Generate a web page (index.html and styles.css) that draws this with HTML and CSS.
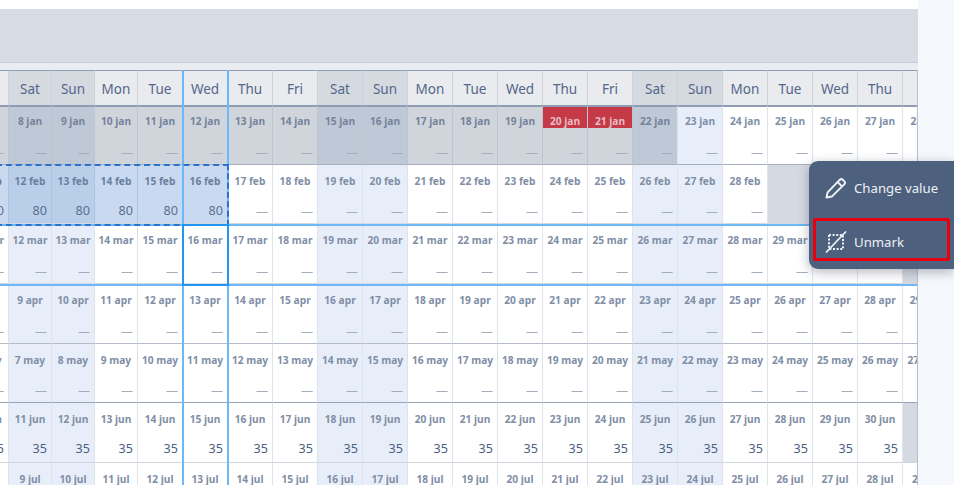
FILE: index.html
```html
<!DOCTYPE html>
<html lang="en">
<head>
    <meta charset="UTF-8">
    <meta name="viewport" content="width=device-width, initial-scale=1.0">
    <title>Calendar</title>
    <link rel="stylesheet" href="styles.css">
</head>
<body>
    <div class="page">
        <main class="main">
            <div class="toolbar"></div>
            <div class="strip"></div>
            <div class="calendar">
                <div class="row head">
                    <div class="cell"></div>
                    <div class="cell we">Sat</div><div class="cell we">Sun</div><div class="cell">Mon</div><div class="cell">Tue</div><div class="cell">Wed</div><div class="cell">Thu</div><div class="cell">Fri</div>
                    <div class="cell we">Sat</div><div class="cell we">Sun</div><div class="cell">Mon</div><div class="cell">Tue</div><div class="cell">Wed</div><div class="cell">Thu</div><div class="cell">Fri</div>
                    <div class="cell we">Sat</div><div class="cell we">Sun</div><div class="cell">Mon</div><div class="cell">Tue</div><div class="cell">Wed</div><div class="cell">Thu</div>
                    <div class="cell"></div>
                </div>
                <div class="row jan">
                    <div class="cell past"><b>7 jan</b><i>—</i></div>
                    <div class="cell past we"><b>8 jan</b><i>—</i></div><div class="cell past we"><b>9 jan</b><i>—</i></div><div class="cell past"><b>10 jan</b><i>—</i></div><div class="cell past"><b>11 jan</b><i>—</i></div><div class="cell past"><b>12 jan</b><i>—</i></div><div class="cell past"><b>13 jan</b><i>—</i></div><div class="cell past"><b>14 jan</b><i>—</i></div>
                    <div class="cell past we"><b>15 jan</b><i>—</i></div><div class="cell past we"><b>16 jan</b><i>—</i></div><div class="cell past"><b>17 jan</b><i>—</i></div><div class="cell past"><b>18 jan</b><i>—</i></div><div class="cell past"><b>19 jan</b><i>—</i></div><div class="cell past closed"><b>20 jan</b><i>—</i></div><div class="cell past closed"><b>21 jan</b><i>—</i></div>
                    <div class="cell past we"><b>22 jan</b><i>—</i></div><div class="cell we"><b>23 jan</b><i>—</i></div><div class="cell"><b>24 jan</b><i>—</i></div><div class="cell"><b>25 jan</b><i>—</i></div><div class="cell"><b>26 jan</b><i>—</i></div><div class="cell"><b>27 jan</b><i>—</i></div>
                    <div class="cell"><b>28 jan</b></div>
                </div>
                <div class="row feb">
                    <div class="cell sel"><b>11 feb</b><i>80</i></div>
                    <div class="cell sel we"><b>12 feb</b><i>80</i></div><div class="cell sel we"><b>13 feb</b><i>80</i></div><div class="cell sel"><b>14 feb</b><i>80</i></div><div class="cell sel"><b>15 feb</b><i>80</i></div><div class="cell sel"><b>16 feb</b><i>80</i></div><div class="cell"><b>17 feb</b><i>—</i></div><div class="cell"><b>18 feb</b><i>—</i></div>
                    <div class="cell we"><b>19 feb</b><i>—</i></div><div class="cell we"><b>20 feb</b><i>—</i></div><div class="cell"><b>21 feb</b><i>—</i></div><div class="cell"><b>22 feb</b><i>—</i></div><div class="cell"><b>23 feb</b><i>—</i></div><div class="cell"><b>24 feb</b><i>—</i></div><div class="cell"><b>25 feb</b><i>—</i></div>
                    <div class="cell we"><b>26 feb</b><i>—</i></div><div class="cell we"><b>27 feb</b><i>—</i></div><div class="cell"><b>28 feb</b><i>—</i></div><div class="cell off"></div><div class="cell off"></div><div class="cell off"></div>
                    <div class="cell off"></div>
                </div>
                <div class="row mar">
                    <div class="cell"><b>11 mar</b><i>—</i></div>
                    <div class="cell we"><b>12 mar</b><i>—</i></div><div class="cell we"><b>13 mar</b><i>—</i></div><div class="cell"><b>14 mar</b><i>—</i></div><div class="cell"><b>15 mar</b><i>—</i></div><div class="cell"><b>16 mar</b><i>—</i></div><div class="cell"><b>17 mar</b><i>—</i></div><div class="cell"><b>18 mar</b><i>—</i></div>
                    <div class="cell we"><b>19 mar</b><i>—</i></div><div class="cell we"><b>20 mar</b><i>—</i></div><div class="cell"><b>21 mar</b><i>—</i></div><div class="cell"><b>22 mar</b><i>—</i></div><div class="cell"><b>23 mar</b><i>—</i></div><div class="cell"><b>24 mar</b><i>—</i></div><div class="cell"><b>25 mar</b><i>—</i></div>
                    <div class="cell we"><b>26 mar</b><i>—</i></div><div class="cell we"><b>27 mar</b><i>—</i></div><div class="cell"><b>28 mar</b><i>—</i></div><div class="cell"><b>29 mar</b><i>—</i></div><div class="cell"></div><div class="cell"></div>
                    <div class="cell off"></div>
                </div>
                <div class="row apr">
                    <div class="cell"><b>8 apr</b><i>—</i></div>
                    <div class="cell we"><b>9 apr</b><i>—</i></div><div class="cell we"><b>10 apr</b><i>—</i></div><div class="cell"><b>11 apr</b><i>—</i></div><div class="cell"><b>12 apr</b><i>—</i></div><div class="cell"><b>13 apr</b><i>—</i></div><div class="cell"><b>14 apr</b><i>—</i></div><div class="cell"><b>15 apr</b><i>—</i></div>
                    <div class="cell we"><b>16 apr</b><i>—</i></div><div class="cell we"><b>17 apr</b><i>—</i></div><div class="cell"><b>18 apr</b><i>—</i></div><div class="cell"><b>19 apr</b><i>—</i></div><div class="cell"><b>20 apr</b><i>—</i></div><div class="cell"><b>21 apr</b><i>—</i></div><div class="cell"><b>22 apr</b><i>—</i></div>
                    <div class="cell we"><b>23 apr</b><i>—</i></div><div class="cell we"><b>24 apr</b><i>—</i></div><div class="cell"><b>25 apr</b><i>—</i></div><div class="cell"><b>26 apr</b><i>—</i></div><div class="cell"><b>27 apr</b><i>—</i></div><div class="cell"><b>28 apr</b><i>—</i></div>
                    <div class="cell"><b>29 apr</b></div>
                </div>
                <div class="row may">
                    <div class="cell"><b>6 may</b><i>—</i></div>
                    <div class="cell we"><b>7 may</b><i>—</i></div><div class="cell we"><b>8 may</b><i>—</i></div><div class="cell"><b>9 may</b><i>—</i></div><div class="cell"><b>10 may</b><i>—</i></div><div class="cell"><b>11 may</b><i>—</i></div><div class="cell"><b>12 may</b><i>—</i></div><div class="cell"><b>13 may</b><i>—</i></div>
                    <div class="cell we"><b>14 may</b><i>—</i></div><div class="cell we"><b>15 may</b><i>—</i></div><div class="cell"><b>16 may</b><i>—</i></div><div class="cell"><b>17 may</b><i>—</i></div><div class="cell"><b>18 may</b><i>—</i></div><div class="cell"><b>19 may</b><i>—</i></div><div class="cell"><b>20 may</b><i>—</i></div>
                    <div class="cell we"><b>21 may</b><i>—</i></div><div class="cell we"><b>22 may</b><i>—</i></div><div class="cell"><b>23 may</b><i>—</i></div><div class="cell"><b>24 may</b><i>—</i></div><div class="cell"><b>25 may</b><i>—</i></div><div class="cell"><b>26 may</b><i>—</i></div>
                    <div class="cell"><b>27 may</b></div>
                </div>
                <div class="row jun">
                    <div class="cell"><b>10 jun</b><i>35</i></div>
                    <div class="cell we"><b>11 jun</b><i>35</i></div><div class="cell we"><b>12 jun</b><i>35</i></div><div class="cell"><b>13 jun</b><i>35</i></div><div class="cell"><b>14 jun</b><i>35</i></div><div class="cell"><b>15 jun</b><i>35</i></div><div class="cell"><b>16 jun</b><i>35</i></div><div class="cell"><b>17 jun</b><i>35</i></div>
                    <div class="cell we"><b>18 jun</b><i>35</i></div><div class="cell we"><b>19 jun</b><i>35</i></div><div class="cell"><b>20 jun</b><i>35</i></div><div class="cell"><b>21 jun</b><i>35</i></div><div class="cell"><b>22 jun</b><i>35</i></div><div class="cell"><b>23 jun</b><i>35</i></div><div class="cell"><b>24 jun</b><i>35</i></div>
                    <div class="cell we"><b>25 jun</b><i>35</i></div><div class="cell we"><b>26 jun</b><i>35</i></div><div class="cell"><b>27 jun</b><i>35</i></div><div class="cell"><b>28 jun</b><i>35</i></div><div class="cell"><b>29 jun</b><i>35</i></div><div class="cell"><b>30 jun</b><i>35</i></div>
                    <div class="cell off"></div>
                </div>
                <div class="row jul">
                    <div class="cell"></div>
                    <div class="cell we"><b>9 jul</b></div><div class="cell we"><b>10 jul</b></div><div class="cell"><b>11 jul</b></div><div class="cell"><b>12 jul</b></div><div class="cell"><b>13 jul</b></div><div class="cell"><b>14 jul</b></div><div class="cell"><b>15 jul</b></div>
                    <div class="cell we"><b>16 jul</b></div><div class="cell we"><b>17 jul</b></div><div class="cell"><b>18 jul</b></div><div class="cell"><b>19 jul</b></div><div class="cell"><b>20 jul</b></div><div class="cell"><b>21 jul</b></div><div class="cell"><b>22 jul</b></div>
                    <div class="cell we"><b>23 jul</b></div><div class="cell we"><b>24 jul</b></div><div class="cell"><b>25 jul</b></div><div class="cell"><b>26 jul</b></div><div class="cell"><b>27 jul</b></div><div class="cell"><b>28 jul</b></div>
                    <div class="cell"><b>29 jul</b></div>
                </div>

                <div class="hl hl-col"></div>
                <div class="hl hl-row"></div>
                <div class="hl hl-range"></div>
                <div class="hl hl-cell"></div>
            </div>
        </main>
        <aside class="rail"></aside>

        <div class="menu">
            <button class="menu-item">
                <svg width="22" height="22" viewBox="0 0 22 22" fill="none" stroke="#eef1f5" stroke-width="2" stroke-linejoin="round">
                    <path d="M1.5 20.5 L2.6 15.4 L14.6 2.9 Q16.3 1.3 18 2.9 L19.2 4.1 Q20.8 5.8 19.2 7.4 L7 19.4 Z"/>
                    <path d="M12.6 5 L17 9.4"/>
                </svg>
                Change value
            </button>
            <button class="menu-item active">
                <svg width="22" height="22" viewBox="0 0 22 22" fill="none" stroke="#eef1f5">
                    <rect x="4" y="4" width="14" height="14" stroke-width="2" stroke-dasharray="2 1.6"/>
                    <path d="M1 21.5 L21 0.5" stroke-width="1.7"/>
                </svg>
                Unmark
            </button>
        </div>
    </div>
</body>
</html>
```

FILE: styles.css
```css
html, body {
    margin: 0;
    height: 100%;
    overflow: hidden;
}
body {
    font-family: "Noto Sans", sans-serif;
    background: white;
}
.page {
    position: relative;
    display: flex;
    height: 485px;
    overflow: hidden;
}
.main {
    width: 918px;
    flex-shrink: 0;
    padding-top: 9px;
}
.rail {
    flex: 1;
    background-color: #f5f8fc;
}
.toolbar {
    height: 53px;
    background-color: #d7dbe3;
    border-bottom: 1px solid #c5cbd8;
}
.strip {
    height: 7px;
    background-color: #e9ecf0;
}

/* calendar */
.calendar {
    position: relative;
    display: grid;
    grid-template-columns: 8px repeat(3, 43px) repeat(17, 45px) 15px;
    grid-template-rows: 35px repeat(7, 59.7px);
    border-right: 1px solid #b5bfd0;
}
.row {
    display: contents;
}
.cell {
    display: flex;
    flex-direction: column;
    min-width: 0;
    overflow: hidden;
    box-sizing: border-box;
    padding-top: 2px;
    background-color: white;
    border-left: 1px solid #dfe3ea;
    border-bottom: 1px solid #d5d9e2;
}
.cell:first-child {
    border-left: none;
}
.cell b {
    display: block;
    padding: 8px 0 1px;
    font-size: 10.2px;
    line-height: 12px;
    font-weight: 700;
    color: #808ea6;
    text-align: center;
    white-space: nowrap;
}
.cell i {
    display: block;
    margin-top: auto;
    padding: 0 4px 4px 0;
    font-style: normal;
    font-size: 12px;
    line-height: 14px;
    color: #a3adbc;
    text-align: right;
}
.cell:first-child b,
.cell:first-child i {
    flex-shrink: 0;
    width: 43px;
    box-sizing: border-box;
    margin-left: -35px;
}
.cell:last-child b {
    flex-shrink: 0;
    width: 45px;
}
.we { background-color: #e7eef9; }
.past { background-color: #d0d4db; border-left-color: #bfc5d0; }
.past.we { background-color: #bfc8d6; }
.past b { color: #74839c; }
.sel { background-color: #c9daf0; border-left-color: #b0c3dd; }
.sel.we { background-color: #b9cfe9; }
.sel b { color: #6a7f9f; }
.off { background-color: #d5d9e1; }
.closed b {
    background-color: #c43a46;
    color: #e9bcc2;
}

.head .cell {
    align-items: center;
    justify-content: center;
    padding-top: 1px;
    font-size: 13.5px;
    color: #53678a;
    background-color: #e9ebef;
    border-top: 1px solid #8f9db4;
    border-bottom: none;
    border-left-color: #ccd1da;
}
.head .we {
    background-color: #d5d9e0;
}
.jan .cell {
    padding-top: 0;
    border-top: 2px solid #8f9db4;
    border-bottom-color: #a6afc0;
}
.sel i, .jun i {
    padding-bottom: 5px;
    font-size: 12.6px;
    color: #5a6f92;
}
.jun i {
    padding-bottom: 6px;
    color: #4d6080;
}
.apr .cell { border-bottom-color: #b5bcc9; }
.may .cell { border-bottom-color: #97a3b6; }
.jun .cell { border-bottom-color: #cfd4dd; }

/* selection lines */
.hl {
    position: absolute;
    box-sizing: border-box;
}
.hl-col {
    grid-column: 6 / 7;
    grid-row: 1 / -1;
    top: 0;
    bottom: 0;
    left: 0;
    right: -2px;
    border-left: 2px solid #6cb8f8;
    border-right: 2px solid #6cb8f8;
}
.hl-row {
    grid-column: 1 / -1;
    grid-row: 4 / 5;
    top: 0;
    bottom: -2px;
    left: 0;
    right: 0;
    border-top: 2px solid #6cb8f8;
    border-bottom: 2px solid #6cb8f8;
}
.hl-cell {
    grid-column: 6 / 7;
    grid-row: 4 / 5;
    top: 0;
    bottom: -2px;
    left: 0;
    right: -2px;
    border: 2px solid #2196f3;
}
.hl-range {
    grid-column: 1 / 7;
    grid-row: 3 / 4;
    top: -1px;
    bottom: -2px;
    left: -4px;
    right: -2px;
    border: 2px dashed #2a72cb;
}

/* context menu */
.menu {
    position: absolute;
    top: 161px;
    left: 809px;
    right: 0;
    height: 108px;
    box-sizing: border-box;
    padding: 5px 4px 0;
    display: flex;
    flex-direction: column;
    background-color: #4d607d;
    border-radius: 9px 0 0 9px;
    box-shadow: 0 3px 12px rgba(40, 50, 70, 0.35);
}
.menu-item {
    display: flex;
    align-items: center;
    gap: 7px;
    height: 43px;
    padding: 0 0 0 9px;
    font-family: inherit;
    font-size: 13.2px;
    color: #eef1f5;
    background: none;
    border: 3px solid transparent;
    border-radius: 2px;
    cursor: pointer;
}
.menu-item:first-child {
    margin-bottom: 9px;
}
.menu-item.active {
    padding-top: 4px;
    border-color: #e8000f;
}
```
